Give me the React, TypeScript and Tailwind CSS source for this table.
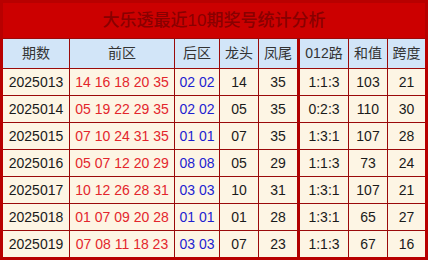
import React from "react";

type Row = {
  issue: string;
  front: string;
  back: string;
  head: string;
  tail: string;
  road: string;
  sum: string;
  span: string;
};

const rows: Row[] = [
  { issue: "2025013", front: "14 16 18 20 35", back: "02 02", head: "14", tail: "35", road: "1:1:3", sum: "103", span: "21" },
  { issue: "2025014", front: "05 19 22 29 35", back: "02 02", head: "05", tail: "35", road: "0:2:3", sum: "110", span: "30" },
  { issue: "2025015", front: "07 10 24 31 35", back: "01 01", head: "07", tail: "35", road: "1:3:1", sum: "107", span: "28" },
  { issue: "2025016", front: "05 07 12 20 29", back: "08 08", head: "05", tail: "29", road: "1:1:3", sum: "73", span: "24" },
  { issue: "2025017", front: "10 12 26 28 31", back: "03 03", head: "10", tail: "31", road: "1:3:1", sum: "107", span: "21" },
  { issue: "2025018", front: "01 07 09 20 28", back: "01 01", head: "01", tail: "28", road: "1:3:1", sum: "65", span: "27" },
  { issue: "2025019", front: "07 08 11 18 23", back: "03 03", head: "07", tail: "23", road: "1:1:3", sum: "67", span: "16" },
];

const headers = ["期数", "前区", "后区", "龙头", "凤尾", "012路", "和值", "跨度"];

// column widths incl. left divider
const cols = "grid-cols-[66px_105px_45px_39px_39px_51px_39px_38px]";

const cellBorder = (i: number) =>
  i === 0 ? "" : i === 5 ? "border-l-[3px] border-[#b00000]" : "border-l border-[#9a0a0a]";

export default function App() {
  return (
    <div className="w-[430px] h-[262px] bg-white font-['Liberation_Sans','Noto_Sans_CJK_SC',sans-serif]">
      <div className="w-[428px] border-[3px] border-[#b80000]">
        <div className="h-[35px] bg-[#cc0000] flex items-center justify-center text-[17px] font-medium text-[#880000]">
          大乐透最近10期奖号统计分析
        </div>
        <div className={`grid ${cols} h-[30px] border-t border-[#9a0a0a] bg-[#d2e5f8] text-[14px] text-[#333]`}>
          {headers.map((h, i) => (
            <div key={h} className={`flex items-center justify-center ${cellBorder(i)}`}>
              {h}
            </div>
          ))}
        </div>
        {rows.map((r) => {
          const vals = [r.issue, r.front, r.back, r.head, r.tail, r.road, r.sum, r.span];
          return (
            <div key={r.issue} className={`grid ${cols} h-[27px] border-t border-[#9a0a0a] bg-[#fdf5e4] text-[14px] text-[#1a1a1a]`}>
              {vals.map((v, i) => (
                <div
                  key={i}
                  className={`flex items-center justify-center whitespace-nowrap ${cellBorder(i)} ${
                    i === 1 ? "text-[#e3262c]" : i === 2 ? "text-[#1e1ed0]" : ""
                  }`}
                >
                  {v}
                </div>
              ))}
            </div>
          );
        })}
      </div>
    </div>
  );
}
